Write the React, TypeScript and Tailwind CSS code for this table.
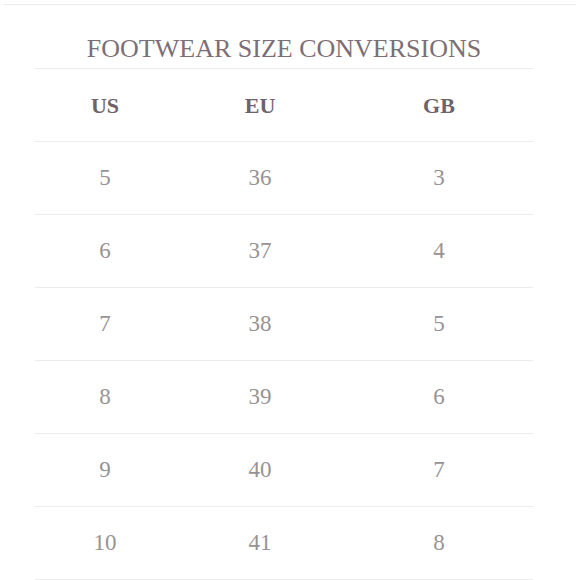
const ROWS: [string, string, string][] = [
  ["5", "36", "3"],
  ["6", "37", "4"],
  ["7", "38", "5"],
  ["8", "39", "6"],
  ["9", "40", "7"],
  ["10", "41", "8"],
];

const serif = "font-['Liberation_Serif','Times_New_Roman',serif]";

export default function App() {
  return (
    <div className={`w-[580px] h-[580px] bg-white overflow-hidden ${serif}`}>
      <div className="mt-[4px] mx-[4px] border-t border-[#ebebeb]" />
      <div className="ml-[35px] w-[498px]">
        <h1 className="mt-[29px] mb-[4px] text-center text-[26px] leading-[30px] text-[#7d6e76] font-normal">
          FOOTWEAR SIZE CONVERSIONS
        </h1>
        <div className="border-t border-[#ececec]">
          <div className="grid grid-cols-[140px_170px_188px] h-[73px] items-center border-b border-[#ececec] text-[22px] font-bold text-[#6f626a]">
            <div className="text-center">US</div>
            <div className="text-center">EU</div>
            <div className="text-center">GB</div>
          </div>
          {ROWS.map((r) => (
            <div
              key={r[0]}
              className="grid grid-cols-[140px_170px_188px] h-[73px] items-center border-b border-[#ececec] text-[23px] text-[#979294]"
            >
              {r.map((v, i) => (
                <div key={i} className="text-center">
                  {v}
                </div>
              ))}
            </div>
          ))}
        </div>
      </div>
    </div>
  );
}
